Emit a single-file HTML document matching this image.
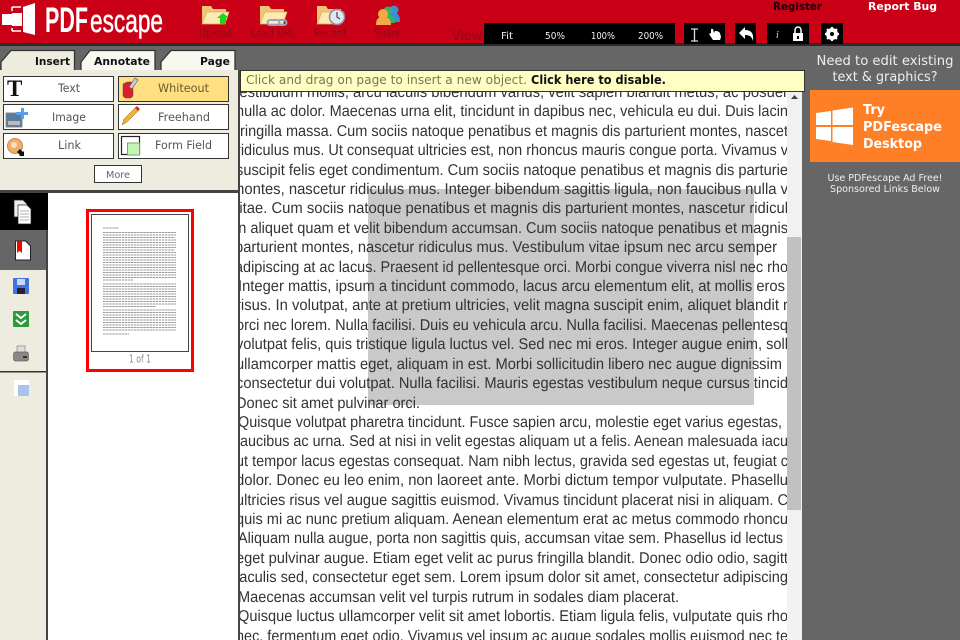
<!DOCTYPE html>
<html><head><meta charset="utf-8"><style>
html,body{margin:0;padding:0;width:960px;height:640px;overflow:hidden;background:#666}
svg{display:block;filter:blur(.35px)}
.d{font-family:"Liberation Sans",sans-serif;font-size:15.6px;fill:#333}
.u{font-family:"DejaVu Sans",sans-serif}
.l{font-family:"DejaVu Sans",sans-serif;font-size:11px;fill:#8c0a18}
.b{font-family:"DejaVu Sans",sans-serif;font-size:11.5px;fill:#555}
</style></head><body>
<svg width="960" height="640" viewBox="0 0 960 640" xmlns="http://www.w3.org/2000/svg">
<defs>
<clipPath id="doc"><rect x="240" y="80" width="547" height="560"/></clipPath>
<g id="folder"><path d="M1 3h9l2 3h13v4h-18L1 21z" fill="#ecc47a"/><path d="M1 21l5-12h22l-4 12z" fill="#fde9b4" stroke="#dcb060" stroke-width=".7"/></g>
</defs>
<rect width="960" height="640" fill="#666"/>
<!-- header -->
<rect width="960" height="43" fill="#c90016"/>
<rect y="43" width="960" height="3" fill="#2a2a2a"/>
<!-- logo -->
<path d="M23 7L35 3V35L23 32Z" fill="#fff"/>
<path d="M2 14H12V13H22V26H12V25H2Z" fill="#fff"/>
<path d="M12 7H21M12 31H21M12 7V11M12 28V31" stroke="#fff" stroke-width="1.5" fill="none"/>
<text x="45" y="32" font-family="Liberation Sans" font-weight="bold" font-size="35" fill="#fff" textLength="43" lengthAdjust="spacingAndGlyphs">PDF</text>
<text x="90" y="32" font-family="Liberation Sans" font-size="32" fill="#fff" stroke="#fff" stroke-width=".5" textLength="73" lengthAdjust="spacingAndGlyphs">escape</text>
<!-- toolbar icons -->
<use href="#folder" x="201" y="3"/>
<path d="M217 18l6-5 6 5h-3v6h-6v-6z" fill="#18d818"/>
<use href="#folder" x="259" y="3"/>
<path d="M270 20h7a2.500 2.500 0 0 1 0 5h-7a2.500 2.500 0 0 1 0-5zM279 20h5a2.500 2.500 0 0 1 0 5h-5" fill="none" stroke="#9aa4b8" stroke-width="2"/>
<use href="#folder" x="316" y="3"/>
<circle cx="337" cy="17" r="7.500" fill="#e4e8ee" stroke="#8a8f9a" stroke-width="1.500"/>
<path d="M337 12v5l3 2" fill="none" stroke="#444" stroke-width="1.200"/>
<circle cx="394" cy="10" r="4.500" fill="#3a8fd8"/><path d="M388 22c0-8 3-9 6-9s6 1 6 9z" fill="#3a8fd8"/>
<circle cx="388" cy="11" r="4.500" fill="#38b068"/><path d="M381 23c0-7 3-8 7-8s7 1 7 8z" fill="#38b068"/>
<circle cx="383" cy="14" r="5" fill="#f4a848"/><path d="M376 25c0-7 3-8 7-8s8 1 8 8z" fill="#f4a848"/>
<text x="199" y="36.500" class="l" textLength="33" lengthAdjust="spacingAndGlyphs">Upload</text>
<text x="251" y="36.500" class="l" textLength="45" lengthAdjust="spacingAndGlyphs">Load URL</text>
<text x="314" y="36.500" class="l" textLength="33" lengthAdjust="spacingAndGlyphs">Recent</text>
<text x="374" y="36.500" class="l" textLength="27" lengthAdjust="spacingAndGlyphs">Share</text>
<text x="452" y="40" class="u" font-size="13" fill="#8c0a18" textLength="30" lengthAdjust="spacingAndGlyphs">View</text>
<text x="773" y="10" class="u" font-size="11" font-weight="bold" fill="#1c0004" textLength="49" lengthAdjust="spacingAndGlyphs">Register</text>
<text x="868" y="10" class="u" font-size="11" font-weight="bold" fill="#fff" textLength="69" lengthAdjust="spacingAndGlyphs">Report Bug</text>
<!-- zoom bar -->
<rect x="484" y="23" width="191" height="21" fill="#000"/>
<g class="u" font-size="10" fill="#eee">
<text x="501" y="39" textLength="12" lengthAdjust="spacingAndGlyphs">Fit</text>
<text x="545" y="39" textLength="20" lengthAdjust="spacingAndGlyphs">50%</text>
<text x="591" y="39" textLength="24" lengthAdjust="spacingAndGlyphs">100%</text>
<text x="638" y="39" textLength="25" lengthAdjust="spacingAndGlyphs">200%</text>
</g>
<rect x="684" y="23" width="41" height="21" fill="#000"/>
<path d="M691 29h7M691 41h7M694.500 29v12" stroke="#ddd" stroke-width="1.300" fill="none"/>
<path d="M711 33l0-4 2 0 1 4 1-2 2 0 2 1 1 1 1 4-1 3h-7l-4-6z" fill="#fff"/>
<rect x="735" y="23" width="21" height="21" fill="#000"/>
<path d="M739 33l6-6v3c6 0 9 3 8 11-1-4-3-6-8-6v4z" fill="#fff"/>
<rect x="767" y="23" width="42" height="21" fill="#000"/>
<text x="776" y="38" font-family="Liberation Serif" font-style="italic" font-size="10" fill="#ddd">i</text>
<path d="M795 33v-3a3 3 0 0 1 6 0v3" fill="none" stroke="#fff" stroke-width="1.500"/><rect x="793" y="33" width="10" height="8" fill="#fff"/><rect x="797" y="36" width="2" height="3" fill="#000"/>
<rect x="821" y="23" width="22" height="21" fill="#000"/>
<circle cx="832" cy="34" r="4.500" fill="none" stroke="#fff" stroke-width="3"/>
<path d="M832 27v14M825 34h14M827 29l10 10M837 29l-10 10" stroke="#fff" stroke-width="2.200"/>
<circle cx="832" cy="34" r="2" fill="#000"/>
<!-- document -->
<rect x="240" y="70" width="547" height="570" fill="#fff"/>
<rect x="368" y="189" width="386" height="216" fill="#c9c9c9"/>
<g clip-path="url(#doc)" class="d" text-rendering="geometricPrecision">
<text x="232" y="97" textLength="556" lengthAdjust="spacingAndGlyphs">vestibulum mollis, arcu iaculis bibendum varius, velit sapien blandit metus, ac posuer</text>
<text x="236" y="116" textLength="552" lengthAdjust="spacingAndGlyphs">nulla ac dolor. Maecenas urna elit, tincidunt in dapibus nec, vehicula eu dui. Duis lacin</text>
<text x="236" y="136" textLength="552" lengthAdjust="spacingAndGlyphs">fringilla massa. Cum sociis natoque penatibus et magnis dis parturient montes, nascet</text>
<text x="236" y="155" textLength="552" lengthAdjust="spacingAndGlyphs">ridiculus mus. Ut consequat ultricies est, non rhoncus mauris congue porta. Vivamus v</text>
<text x="236" y="175" textLength="552" lengthAdjust="spacingAndGlyphs">suscipit felis eget condimentum. Cum sociis natoque penatibus et magnis dis parturie</text>
<text x="232" y="194" textLength="556" lengthAdjust="spacingAndGlyphs">montes, nascetur ridiculus mus. Integer bibendum sagittis ligula, non faucibus nulla v</text>
<text x="232" y="213" textLength="556" lengthAdjust="spacingAndGlyphs">vitae. Cum sociis natoque penatibus et magnis dis parturient montes, nascetur ridicul</text>
<text x="235" y="233" textLength="553" lengthAdjust="spacingAndGlyphs">in aliquet quam et velit bibendum accumsan. Cum sociis natoque penatibus et magnis</text>
<text x="235" y="252" textLength="542" lengthAdjust="spacingAndGlyphs">parturient montes, nascetur ridiculus mus. Vestibulum vitae ipsum nec arcu semper</text>
<text x="235" y="272" textLength="553" lengthAdjust="spacingAndGlyphs">adipiscing at ac lacus. Praesent id pellentesque orci. Morbi congue viverra nisl nec rho</text>
<text x="238" y="291" textLength="547" lengthAdjust="spacingAndGlyphs">Integer mattis, ipsum a tincidunt commodo, lacus arcu elementum elit, at mollis eros</text>
<text x="236" y="310" textLength="552" lengthAdjust="spacingAndGlyphs">risus. In volutpat, ante at pretium ultricies, velit magna suscipit enim, aliquet blandit r</text>
<text x="236" y="330" textLength="552" lengthAdjust="spacingAndGlyphs">orci nec lorem. Nulla facilisi. Duis eu vehicula arcu. Nulla facilisi. Maecenas pellentesq</text>
<text x="236" y="349" textLength="552" lengthAdjust="spacingAndGlyphs">volutpat felis, quis tristique ligula luctus vel. Sed nec mi eros. Integer augue enim, soll</text>
<text x="236" y="369" textLength="546" lengthAdjust="spacingAndGlyphs">ullamcorper mattis eget, aliquam in est. Morbi sollicitudin libero nec augue dignissim</text>
<text x="236" y="388" textLength="552" lengthAdjust="spacingAndGlyphs">consectetur dui volutpat. Nulla facilisi. Mauris egestas vestibulum neque cursus tincid</text>
<text x="236" y="408" textLength="184" lengthAdjust="spacingAndGlyphs">Donec sit amet pulvinar orci.</text>
<text x="238" y="427" textLength="544" lengthAdjust="spacingAndGlyphs">Quisque volutpat pharetra tincidunt. Fusce sapien arcu, molestie eget varius egestas,</text>
<text x="236" y="446" textLength="552" lengthAdjust="spacingAndGlyphs">faucibus ac urna. Sed at nisi in velit egestas aliquam ut a felis. Aenean malesuada iacu</text>
<text x="236" y="466" textLength="552" lengthAdjust="spacingAndGlyphs">ut tempor lacus egestas consequat. Nam nibh lectus, gravida sed egestas ut, feugiat c</text>
<text x="236" y="485" textLength="552" lengthAdjust="spacingAndGlyphs">dolor. Donec eu leo enim, non laoreet ante. Morbi dictum tempor vulputate. Phasellu</text>
<text x="236" y="505" textLength="552" lengthAdjust="spacingAndGlyphs">ultricies risus vel augue sagittis euismod. Vivamus tincidunt placerat nisi in aliquam. C</text>
<text x="236" y="524" textLength="552" lengthAdjust="spacingAndGlyphs">quis mi ac nunc pretium aliquam. Aenean elementum erat ac metus commodo rhoncu</text>
<text x="238" y="543" textLength="545" lengthAdjust="spacingAndGlyphs">Aliquam nulla augue, porta non sagittis quis, accumsan vitae sem. Phasellus id lectus</text>
<text x="236" y="563" textLength="552" lengthAdjust="spacingAndGlyphs">eget pulvinar augue. Etiam eget velit ac purus fringilla blandit. Donec odio odio, sagitt</text>
<text x="236" y="582" textLength="552" lengthAdjust="spacingAndGlyphs">iaculis sed, consectetur eget sem. Lorem ipsum dolor sit amet, consectetur adipiscing</text>
<text x="238" y="602" textLength="441" lengthAdjust="spacingAndGlyphs">Maecenas accumsan velit vel turpis rutrum in sodales diam placerat.</text>
<text x="238" y="621" textLength="550" lengthAdjust="spacingAndGlyphs">Quisque luctus ullamcorper velit sit amet lobortis. Etiam ligula felis, vulputate quis rho</text>
<text x="236" y="641" textLength="552" lengthAdjust="spacingAndGlyphs">nec, fermentum eget odio. Vivamus vel ipsum ac augue sodales mollis euismod nec te</text>
</g>
<!-- scrollbar -->
<rect x="787" y="91" width="15" height="549" fill="#f1f1f1"/>
<rect x="787" y="237" width="14" height="273" fill="#c1c1c1"/>
<path d="M791 99l3.500-4 3.500 4z" fill="#444"/>
<rect x="802" y="46" width="158" height="594" fill="#666"/>
<!-- yellow bar -->
<rect x="240.500" y="70.500" width="564" height="21" fill="#ffffc4" stroke="#333" stroke-width="1"/>
<text x="246" y="84" class="u" font-size="12.500" fill="#77775a" textLength="281" lengthAdjust="spacingAndGlyphs">Click and drag on page to insert a new object.</text>
<text x="531" y="84" class="u" font-size="12.500" font-weight="bold" fill="#111" textLength="135" lengthAdjust="spacingAndGlyphs">Click here to disable.</text>
<!-- right panel -->
<g class="u" fill="#eee" text-anchor="middle">
<text x="885" y="65" font-size="13" textLength="137" lengthAdjust="spacingAndGlyphs">Need to edit existing</text>
<text x="885" y="81" font-size="13" textLength="105" lengthAdjust="spacingAndGlyphs">text &amp; graphics?</text>
<text x="885" y="181" font-size="10" textLength="115" lengthAdjust="spacingAndGlyphs">Use PDFescape Ad Free!</text>
<text x="885" y="192" font-size="10" textLength="110" lengthAdjust="spacingAndGlyphs">Sponsored Links Below</text>
</g>
<rect x="810" y="90" width="150" height="72" fill="#ff7f27"/>
<path d="M816 113l15-2v14h-15zM832.500 110.500l20.500-3v17.500h-20.500zM816 127h15v14l-15-2zM832.500 127H853v18l-20.500-3z" fill="#fff"/>
<g class="u" font-size="13.500" font-weight="bold" fill="#fff">
<text x="863" y="114" textLength="22" lengthAdjust="spacingAndGlyphs">Try</text>
<text x="863" y="131" textLength="79" lengthAdjust="spacingAndGlyphs">PDFescape</text>
<text x="863" y="148" textLength="59" lengthAdjust="spacingAndGlyphs">Desktop</text>
</g>
<!-- left tabs -->
<rect x="0" y="46" width="240" height="594" fill="#666"/>
<path d="M1 70V62L11 50.500H74.500V70" fill="#eeecdf" stroke="#333" stroke-width="1.300"/>
<path d="M81 70V62L90 50.500H155V70" fill="#f8f7f0" stroke="#333" stroke-width="1.300"/>
<path d="M161 70V62L171 50.500H235V70" fill="#f8f7f0" stroke="#333" stroke-width="1.300"/>
<g class="u" font-size="11" font-weight="bold" fill="#111">
<text x="35" y="65" textLength="35" lengthAdjust="spacingAndGlyphs">Insert</text>
<text x="94" y="65" textLength="56" lengthAdjust="spacingAndGlyphs">Annotate</text>
<text x="200" y="65" textLength="30" lengthAdjust="spacingAndGlyphs">Page</text>
</g>
<!-- panel -->
<rect x="0" y="70" width="238" height="120" fill="#eeecdf"/>
<rect y="190" width="240" height="3" fill="#444"/>
<rect x="238" y="70" width="2" height="570" fill="#444"/>
<g fill="#fff" stroke="#333" stroke-width="1">
<rect x="3.500" y="76.500" width="110" height="25"/>
<rect x="118.500" y="76.500" width="110" height="25" fill="#ffdf80"/>
<rect x="3.500" y="104.500" width="110" height="25"/>
<rect x="118.500" y="104.500" width="110" height="25"/>
<rect x="3.500" y="133.500" width="110" height="25"/>
<rect x="118.500" y="133.500" width="110" height="25"/>
<rect x="94.500" y="165.500" width="47" height="17"/>
</g>
<g>
<text x="58" y="92" class="b" textLength="22" lengthAdjust="spacingAndGlyphs">Text</text>
<text x="158" y="92" class="b" textLength="51" lengthAdjust="spacingAndGlyphs" style="fill:#6a5a30">Whiteout</text>
<text x="52" y="121" class="b" textLength="34" lengthAdjust="spacingAndGlyphs">Image</text>
<text x="158" y="121" class="b" textLength="52" lengthAdjust="spacingAndGlyphs">Freehand</text>
<text x="58" y="149" class="b" textLength="23" lengthAdjust="spacingAndGlyphs">Link</text>
<text x="155" y="149" class="b" textLength="57" lengthAdjust="spacingAndGlyphs">Form Field</text>
<text x="106" y="178" font-family="DejaVu Sans" font-size="10" fill="#666" textLength="24" lengthAdjust="spacingAndGlyphs">More</text>
</g>
<text x="7" y="96" font-family="Liberation Serif" font-weight="bold" font-size="23" fill="#111">T</text>
<path d="M123 84l4-2h5l1 2v12l-2 2h-6l-2-2z" fill="#d8202c" stroke="#555" stroke-width=".5"/><path d="M129 87l6-9 3 2-6 9z" fill="#c4ced6" stroke="#555" stroke-width=".6"/>
<rect x="6" y="113" width="16" height="14" fill="#5c7a9c" stroke="#8a8a8a"/><rect x="8" y="121" width="12" height="4" fill="#bbb"/>
<path d="M16 112h5v-4h3v4h4v3h-4v4h-3v-4h-5z" fill="#5aa0e8"/>
<path d="M122 125l2-6 12-12 3 3-12 12z" fill="#f0b030" stroke="#8a6a20" stroke-width=".5"/><path d="M135 108l2-2 3 3-2 2z" fill="#d83030"/>
<circle cx="15" cy="146" r="7.500" fill="#f2ad6c" stroke="#c88850"/><circle cx="14" cy="145" r="3" fill="#fbe0c0"/>
<path d="M17 152l3-3 3 3 1-1v5h-5l1-1z" fill="#111"/>
<rect x="121.500" y="136.500" width="18" height="18" fill="#fff" stroke="#222" stroke-width="1.200"/>
<rect x="127.500" y="143" width="12" height="12" fill="#c4f4b8" stroke="#6ab060"/>
<!-- sidebar -->
<rect x="0" y="193" width="46" height="447" fill="#eeecdf"/>
<rect x="0" y="193" width="48" height="37" fill="#000"/>
<rect x="0" y="230" width="46" height="40" fill="#666"/>
<rect x="46" y="230" width="2" height="410" fill="#444"/>
<rect x="48" y="193" width="190" height="447" fill="#fff"/>
<rect x="0" y="371" width="46" height="1.500" fill="#333"/>
<path d="M14 200h9l4 4v13H14z" fill="#eee" stroke="#222" stroke-width=".7"/>
<path d="M18 205h9l4 4v15H18z" fill="#fff" stroke="#222" stroke-width=".7"/>
<path d="M20 211h9M20 214h9M20 217h9M20 220h9" stroke="#999" stroke-width=".8"/>
<path d="M15.500 241h10l5 5v14h-15z" fill="#fff" stroke="#222"/>
<path d="M17 241h5v12l-2.500-2-2.500 2z" fill="#f00"/>
<rect x="13" y="278" width="16" height="16" rx="1" fill="#3f74e0"/><rect x="17" y="279" width="8" height="6" fill="#c8d8f4"/><rect x="17" y="288" width="8" height="6" fill="#223"/>
<rect x="13" y="311" width="16" height="16" rx="1" fill="#2a9a3a"/>
<path d="M16 314l5 4 5-4M16 320l5 4 5-4" fill="none" stroke="#fff" stroke-width="2"/>
<rect x="17" y="346" width="8" height="7" fill="#ddd" stroke="#888" stroke-width=".7"/>
<rect x="13.500" y="352" width="15" height="9" rx="2" fill="#888" stroke="#666" stroke-width=".7"/><rect x="23" y="356" width="4" height="2" fill="#333"/>
<rect x="14" y="380" width="15" height="16" fill="#fff"/><rect x="18" y="385" width="11" height="11" fill="#a8c4ec"/>
<!-- thumbnail -->
<rect x="87.500" y="210.500" width="105" height="160" fill="#fff" stroke="#f00" stroke-width="3"/>
<rect x="91.500" y="214.500" width="97" height="137" fill="#fff" stroke="#444" stroke-width="1"/>
<g stroke="#777" stroke-width="1" stroke-dasharray="2.500 .6" fill="none" opacity=".75">
<path d="M103 228h16M103 232.500h73M103 235h73M103 237.500h72M103 240h73M103 242.500h73M103 245h73M103 247.500h73M103 250h72M103 252.500h73M103 255h73M103 257.500h73M103 260h73M103 262.500h73M103 265h73M103 267.500h73M103 270h73M103 272.500h73M103 275h73M103 277.500h73M103 280h30"/>
<path d="M103 284h73M103 286.500h73M103 289h73M103 291.500h73M103 294h73M103 296.500h73M103 299h73M103 301.500h73M103 304h73M103 306.500h53"/>
<path d="M103 310h73M103 312.500h73M103 315h73M103 317.500h73M103 320h73M103 322.500h73M103 325h73M103 327.500h73M103 330h73M103 334h26"/>
</g>
<text x="129" y="362.500" class="u" font-size="11" fill="#888" textLength="22" lengthAdjust="spacingAndGlyphs">1 of 1</text>
</svg>
</body></html>
